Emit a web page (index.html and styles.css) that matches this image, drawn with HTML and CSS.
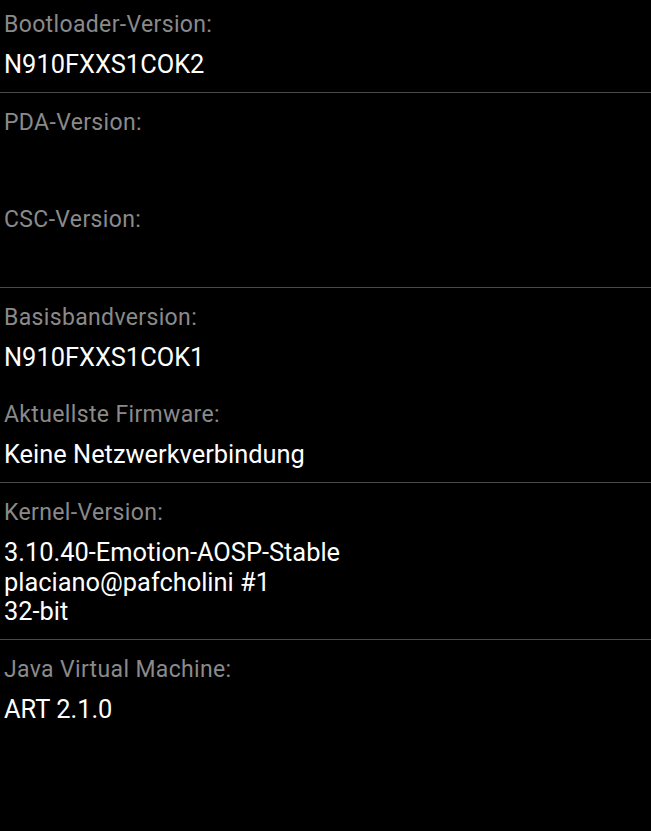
FILE: index.html
```html
<!DOCTYPE html>
<html lang="de">
<head>
  <meta charset="UTF-8">
  <meta name="viewport" content="width=device-width, initial-scale=1.0">
  <title>Geräteinfo</title>
  <link rel="stylesheet" href="styles.css">
</head>
<body>
  <div class="list">
    <!-- Bootloader -->
    <section class="group">
      <div class="item">
        <div class="label">Bootloader-Version:</div>
        <div class="value">N910FXXS1COK2</div>
      </div>
    </section>

    <!-- PDA / CSC -->
    <section class="group">
      <div class="item">
        <div class="label">PDA-Version:</div>
        <div class="value"></div>
      </div>
      <div class="item">
        <div class="label">CSC-Version:</div>
        <div class="value"></div>
      </div>
    </section>

    <!-- Baseband / Firmware -->
    <section class="group">
      <div class="item">
        <div class="label">Basisbandversion:</div>
        <div class="value">N910FXXS1COK1</div>
      </div>
      <div class="item">
        <div class="label">Aktuellste Firmware:</div>
        <div class="value">Keine Netzwerkverbindung</div>
      </div>
    </section>

    <!-- Kernel -->
    <section class="group">
      <div class="item">
        <div class="label">Kernel-Version:</div>
        <div class="value">3.10.40-Emotion-AOSP-Stable<br>placiano@pafcholini #1<br>32-bit</div>
      </div>
    </section>

    <!-- JVM -->
    <section class="group">
      <div class="item">
        <div class="label">Java Virtual Machine:</div>
        <div class="value">ART 2.1.0</div>
      </div>
    </section>
  </div>
</body>
</html>
```
FILE: styles.css
```css
html, body { background: #000; }
body { margin: 0; font-family: Roboto, "Noto Sans", sans-serif; }
.list { margin-top: -5px; }
.group { border-bottom: 1px solid #4a4a4a; }
.group:last-child { border-bottom: none; }
.item { padding: 16px 4px 12.5px 4px; }
.label { font-size: 23px; letter-spacing: 0.35px; line-height: 28px; color: #8a8a8a; margin-bottom: 11px; }
.value { font-size: 25.4px; line-height: 29.5px; color: #fff; min-height: 29.5px; }
```
